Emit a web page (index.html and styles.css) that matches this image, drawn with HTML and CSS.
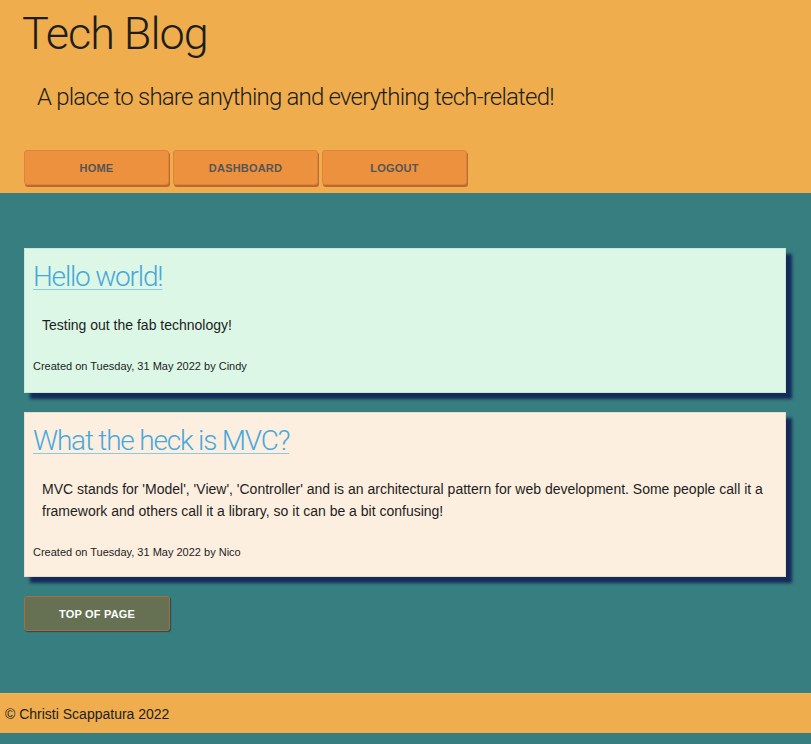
FILE: index.html
```html
<!DOCTYPE html>
<html lang="en">
<head>
<meta charset="utf-8">
<title>Tech Blog</title>
<link rel="stylesheet" href="styles.css">
</head>
<body>
<header class="site-header" id="top">
  <h1 class="site-title">Tech Blog</h1>
  <p class="site-tagline">A place to share anything and everything tech-related!</p>
  <nav class="site-nav">
    <a class="nav-btn" href="#">HOME</a>
    <a class="nav-btn" href="#">DASHBOARD</a>
    <a class="nav-btn" href="#">LOGOUT</a>
  </nav>
</header>
<main class="content">
  <article class="post post-green">
    <h2 class="post-title"><a href="#">Hello world!</a></h2>
    <p class="post-body">Testing out the fab technology!</p>
    <p class="post-meta">Created on Tuesday, 31 May 2022 by Cindy</p>
  </article>
  <article class="post post-cream">
    <h2 class="post-title"><a href="#">What the heck is MVC?</a></h2>
    <p class="post-body">MVC stands for 'Model', 'View', 'Controller' and is an architectural pattern for web development. Some people call it a framework and others call it a library, so it can be a bit confusing!</p>
    <p class="post-meta">Created on Tuesday, 31 May 2022 by Nico</p>
  </article>
  <a class="top-btn" href="#top">TOP OF PAGE</a>
</main>
<footer class="site-footer">© Christi Scappatura 2022</footer>
</body>
</html>
```
FILE: styles.css
```css
html, body {
  margin: 0;
  padding: 0;
}
body {
  background: #377e80;
  font-family: "Liberation Sans", Arial, sans-serif;
  color: #1d1d1d;
  padding-bottom: 11px;
}
.site-header {
  background: #efad4e;
  padding: 6px 24px 8px 22px;
}
.site-title {
  margin: 0;
  font-family: Roboto, "Liberation Sans", sans-serif;
  font-weight: 300;
  font-size: 45px;
  line-height: 56px;
  color: #1d1d1d;
  letter-spacing: -1px;
}
.site-tagline {
  margin: 20px 0 0 15px;
  font-family: Roboto, "Liberation Sans", sans-serif;
  font-weight: 300;
  font-size: 24px;
  line-height: 30px;
  letter-spacing: -0.8px;
  color: #1d1d1d;
}
.site-nav {
  display: flex;
  gap: 4px;
  margin: 38px 0 0 2px;
}
.nav-btn {
  box-sizing: border-box;
  width: 145px;
  height: 35px;
  display: flex;
  align-items: center;
  justify-content: center;
  background: #ec913e;
  border: 1px solid #e3813a;
  border-radius: 3px;
  box-shadow: 1px 2px 0 #b86a35;
  color: #555;
  font-size: 11px;
  font-weight: bold;
  letter-spacing: 0.2px;
  text-decoration: none;
}
.content {
  padding: 55px 25px 62px 24px;
  display: flex;
  flex-direction: column;
  align-items: flex-start;
}
.post {
  align-self: stretch;
  border: 1px solid #c8e6da;
  box-shadow: 6px 6px 3px #142a58;
  padding: 9px 9px 19px 8px;
  margin-bottom: 19px;
}
.post-green {
  background: #dcf7e6;
}
.post-cream {
  background: #fcefe0;
  border-color: #e9dccd;
  padding-bottom: 17px;
}
.post-title {
  margin: 0;
  font-family: Roboto, "Liberation Sans", sans-serif;
  font-weight: 300;
  font-size: 28px;
  line-height: 38px;
  letter-spacing: -1.2px;
}
.post-title a {
  color: #49a8da;
  text-decoration: underline;
  text-decoration-color: #8cc8df;
  text-decoration-thickness: 1px;
  text-underline-offset: 3px;
}
.post-body {
  margin: 18px 0 0 9px;
  font-size: 14px;
  line-height: 22px;
}
.post-meta {
  margin: 23px 0 0 0;
  font-size: 11px;
  line-height: 14px;
}
.top-btn {
  box-sizing: border-box;
  width: 146px;
  height: 35px;
  display: flex;
  align-items: center;
  justify-content: center;
  background: #657152;
  border: 1px solid #a4713e;
  border-radius: 3px;
  box-shadow: 1px 1px 1px #2c4a4a;
  color: #fff;
  font-size: 11px;
  font-weight: bold;
  letter-spacing: 0.2px;
  text-decoration: none;
}
.site-footer {
  background: #efad4e;
  border-top: 1px solid #f3b757;
  height: 39px;
  box-sizing: content-box;
  display: flex;
  align-items: center;
  padding-left: 5px;
  font-size: 14px;
  color: #1d1d1d;
}
```
